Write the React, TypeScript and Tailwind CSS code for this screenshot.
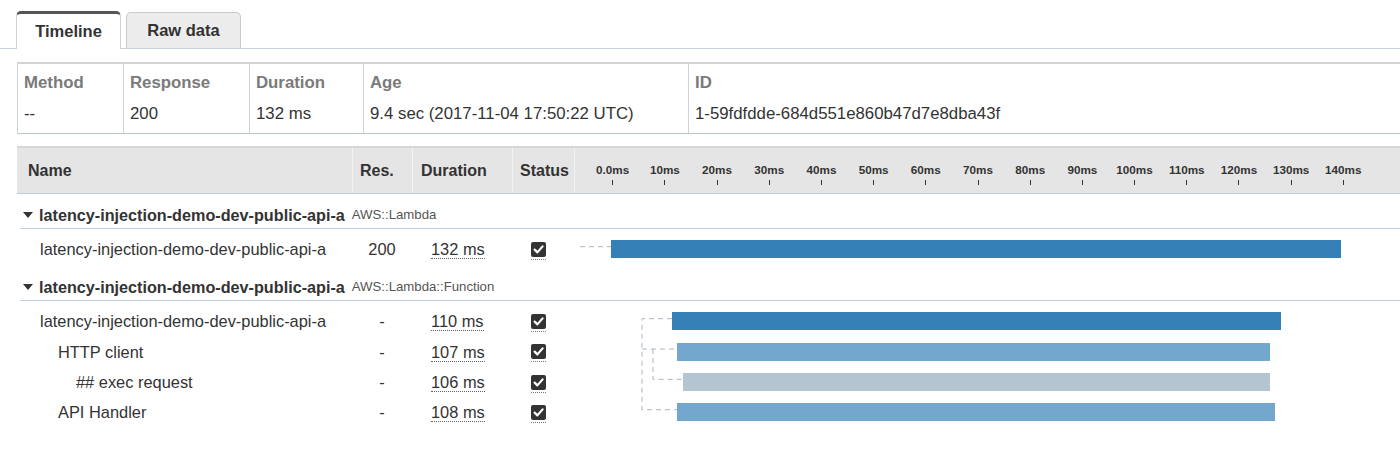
import React from 'react';

/* ─── Trace data ─────────────────────────────────────────────────────────── */
const ROW_H = 30.33;
const rowY = (i: number) => 17.7 + ROW_H * i;

const BAR = {
  dark: 'bg-[#3680b8]',
  mid: 'bg-[#73a7cd]',
  light: 'bg-[#b3c5d1]',
};

const INDENT = ['pl-[23px]', 'pl-[41px]', 'pl-[59px]'];

type Row = {
  name: string;
  depth: number;
  res: string;
  dur: string;
  left: number;
  width: number;
  bar: string;
};

type Group = { name: string; type: string; rows: Row[]; links: string[] };

const FN = 'latency-injection-demo-dev-public-api-a';

const groups: Group[] = [
  {
    name: FN,
    type: 'AWS::Lambda',
    rows: [{ name: FN, depth: 0, res: '200', dur: '132 ms', left: 37, width: 730, bar: BAR.dark }],
    links: [`M6 ${rowY(0)} H37`],
  },
  {
    name: FN,
    type: 'AWS::Lambda::Function',
    rows: [
      { name: FN, depth: 0, res: '-', dur: '110 ms', left: 98, width: 609, bar: BAR.dark },
      { name: 'HTTP client', depth: 1, res: '-', dur: '107 ms', left: 103, width: 593, bar: BAR.mid },
      { name: '## exec request', depth: 2, res: '-', dur: '106 ms', left: 109, width: 587, bar: BAR.light },
      { name: 'API Handler', depth: 1, res: '-', dur: '108 ms', left: 103, width: 598, bar: BAR.mid },
    ],
    links: [
      `M98 ${rowY(0)} H68 V${rowY(3)} H103`,
      `M68 ${rowY(1)} H103`,
      `M79 ${rowY(1)} V${rowY(2)} H109`,
    ],
  },
];

const ticks = Array.from({ length: 15 }, (_, i) => (i === 0 ? '0.0ms' : `${i * 10}ms`));

const summary = [
  { label: 'Method', value: '--', w: 'w-[106px]' },
  { label: 'Response', value: '200', w: 'w-[126px]' },
  { label: 'Duration', value: '132 ms', w: 'w-[114px]' },
  { label: 'Age', value: '9.4 sec (2017-11-04 17:50:22 UTC)', w: 'w-[325px]' },
  { label: 'ID', value: '1-59fdfdde-684d551e860b47d7e8dba43f', w: 'flex-1' },
];

/* ─── Bits ───────────────────────────────────────────────────────────────── */
function CheckBox() {
  return (
    <span className="inline-flex mt-[3px] pb-[2px] border-b border-dotted border-[#777]">
      <svg width="15" height="15" viewBox="0 0 15 15" aria-hidden="true">
        <rect x="0" y="0" width="15" height="15" rx="2" fill="#333" />
        <path d="M3.6 7.6 L6.4 10.4 L11.6 4.4" fill="none" stroke="#fff" strokeWidth="2.2" strokeLinecap="round" strokeLinejoin="round" />
      </svg>
    </span>
  );
}

function TraceRow({ row }: { row: Row }) {
  return (
    <div className="flex items-center h-[30.33px] text-[16.4px] text-[#333]">
      <div className={`w-[335px] whitespace-nowrap ${INDENT[row.depth]}`}>{row.name}</div>
      <div className="w-[60px] text-center">{row.res}</div>
      <div className="w-[100px] pl-[19px]">
        <span className="inline-block leading-[18px] border-b border-dotted border-[#666]">{row.dur}</span>
      </div>
      <div className="w-[62px] pl-[19px] flex items-center">
        <CheckBox />
      </div>
      <div className="flex-1 flex items-center">
        <div className={`h-[18px] ${row.bar}`} style={{ marginLeft: row.left, width: row.width }} />
      </div>
    </div>
  );
}

function TraceGroup({ group }: { group: Group }) {
  return (
    <div>
      <div className="ml-[3px] flex items-center pt-[11px] pb-[3px] border-b border-[#c5d1da]">
        <span className="ml-[3px] w-0 h-0 border-x-[5px] border-x-transparent border-t-[6px] border-t-[#333]" />
        <span className="ml-[6px] leading-[20px] text-[16.2px] font-bold text-[#333] whitespace-nowrap">{group.name}</span>
        <span className="ml-[7px] text-[13.2px] text-[#555] whitespace-nowrap">{group.type}</span>
      </div>
      <div className="relative pt-[5px] pb-[2px]">
        {group.rows.map((r, i) => (
          <TraceRow key={i} row={r} />
        ))}
        <svg className="absolute left-[557px] top-0 pointer-events-none" width="130" height="100%" overflow="visible" aria-hidden="true">
          {group.links.map((d, i) => (
            <path key={i} d={d} fill="none" stroke="#aab6c0" strokeWidth="1" strokeDasharray="5 4" />
          ))}
        </svg>
      </div>
    </div>
  );
}

/* ─── Page ───────────────────────────────────────────────────────────────── */
export default function App() {
  return (
    <div className="w-[1400px] h-[457px] overflow-hidden bg-white pt-[11px] font-['Liberation_Sans',Arial,sans-serif] text-[#333]">
      {/* tabs */}
      <div className="flex items-end gap-[5px] pl-[16px] h-[38px] border-b border-[#c8d2da]">
        <div className="relative z-10 -mb-px h-[38px] w-[105px] flex items-center justify-center bg-white border-x border-[#cfcfcf] border-t-[3px] border-t-[#555] rounded-t-[5px] text-[16.5px] font-bold">
          Timeline
        </div>
        <div className="h-[36px] w-[115px] flex items-center justify-center bg-[#ececec] border-x border-t border-[#cacaca] rounded-t-[5px] text-[16.5px] font-bold">
          Raw data
        </div>
      </div>

      {/* summary */}
      <div className="mt-[13px] ml-[17px] w-[1400px] flex border-l border-[#c9d3da] border-t-2 border-t-[#d3d3d3] border-b border-b-[#b9c6d0]">
        {summary.map((c) => (
          <div key={c.label} className={`${c.w} pl-[6px] pt-[9px] pb-[9px] border-r border-[#c9d3da] text-[16.8px] leading-[20px] whitespace-nowrap`}>
            <div className="font-bold text-[#7a7a7a]">{c.label}</div>
            <div className="mt-[11px] text-[#333]">{c.value}</div>
          </div>
        ))}
      </div>

      {/* timeline table */}
      <div className="mt-[12px] ml-[17px] w-[1400px]">
        <div className="flex h-[48px] bg-[#e5e5e5] border-t-2 border-[#d6d6d6] border-b border-b-[#bfcbd4] text-[16px] font-bold text-[#333]">
          <div className="w-[335px] pl-[11px] flex items-center">Name</div>
          <div className="w-[60px] pl-[7px] flex items-center border-l border-[#f3f3f3]">Res.</div>
          <div className="w-[100px] pl-[8px] flex items-center border-l border-[#f3f3f3]">Duration</div>
          <div className="w-[62px] pl-[7px] flex items-center border-l border-[#f3f3f3]">Status</div>
          <div className="flex-1 flex pl-[11.6px] border-l border-[#f3f3f3]">
            {ticks.map((t) => (
              <div key={t} className="w-[52.2px] shrink-0 flex flex-col items-center pt-[15px]">
                <span className="text-[11.7px] leading-[14px] font-bold whitespace-nowrap">{t}</span>
                <span className="mt-[3px] w-px h-[5px] bg-[#333]" />
              </div>
            ))}
          </div>
        </div>

        {groups.map((g, i) => (
          <TraceGroup key={i} group={g} />
        ))}
      </div>
    </div>
  );
}
